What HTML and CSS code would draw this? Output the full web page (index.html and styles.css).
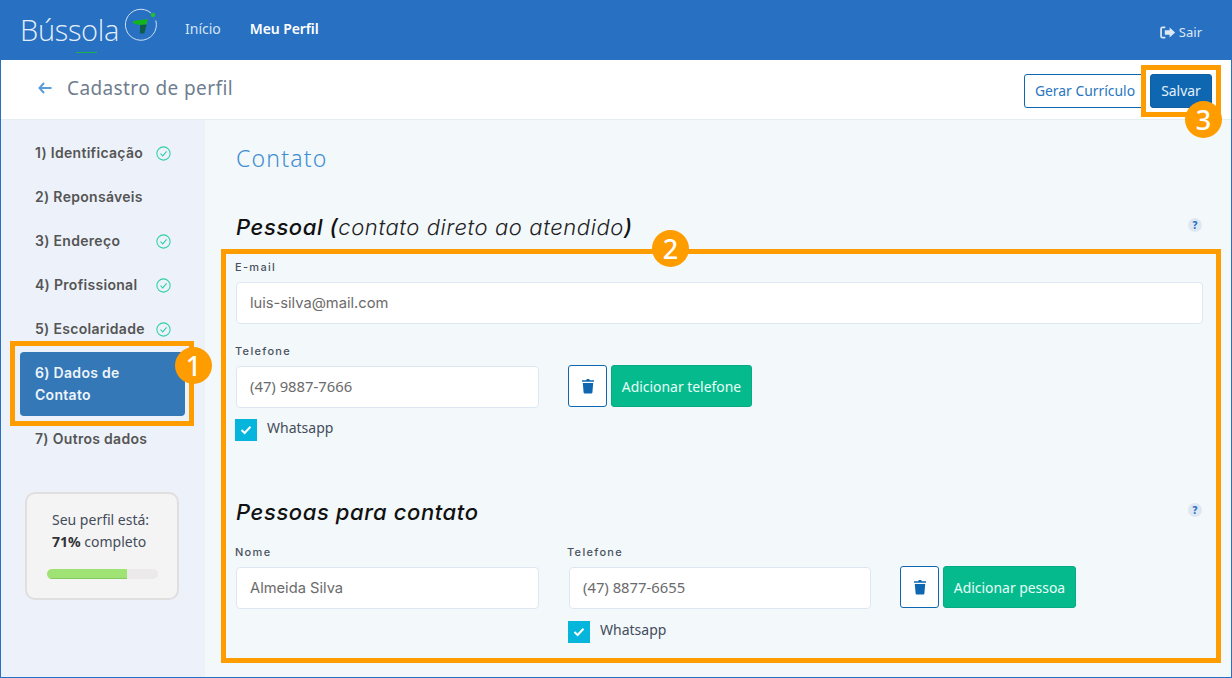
FILE: index.html
```html
<!DOCTYPE html>
<html lang="pt-BR">
<head>
<meta charset="utf-8">
<title>Bússola - Cadastro de perfil</title>
<link rel="stylesheet" href="styles.css">
</head>
<body>
<div class="frame">
  <header class="topbar">
    <div class="logo">
      <span class="logo-text">Bússola</span>
      <svg class="logo-mark" width="34" height="34" viewBox="0 0 34 34" aria-hidden="true">
        <path d="M27 5A15.5 15.5 0 1 0 31.8 12.5" fill="none" stroke="#cfe0f3" stroke-width="1"/>
        <circle cx="29" cy="7" r="2.2" fill="#22c02c"/>
        <path d="M8.7 13 23.7 11 22.7 16.4 16 17 9.5 15.6Z" fill="#12b51f"/>
        <path d="M16 17 22.7 16.4 20.3 25.4H16Z" fill="#0f5a4a"/>
      </svg>
      <span class="logo-line"></span>
    </div>
    <nav class="nav">
      <a class="nav-link">Início</a>
      <a class="nav-link nav-active">Meu Perfil</a>
    </nav>
    <a class="logout">
      <svg width="16" height="13" viewBox="0 0 15 12" aria-hidden="true">
        <path d="M5 1.2H2.4A1.4 1.4 0 0 0 1 2.6v6.8a1.4 1.4 0 0 0 1.4 1.4H5" fill="none" stroke="#dce8f6" stroke-width="1.6"/>
        <path d="M9 1.2 14.2 6 9 10.8V8H4.5V4H9Z" fill="#dce8f6"/>
      </svg>
      Sair
    </a>
  </header>

  <div class="subbar">
    <svg class="back" width="14" height="12" viewBox="0 0 14 12" aria-hidden="true">
      <path d="M6 1 1.5 6 6 11M2 6h11.5" fill="none" stroke="#5b9bd8" stroke-width="2"/>
    </svg>
    <h1 class="page-title">Cadastro de perfil</h1>
    <div class="actions">
      <button class="btn btn-outline">Gerar Currículo</button>
      <button class="btn btn-primary">Salvar</button>
    </div>
  </div>

  <div class="body">
    <aside class="sidebar">
      <ul class="steps">
        <li class="step"><span>1) Identificação</span><svg class="ok" viewBox="0 0 14 14"><circle cx="7" cy="7" r="6.2"/><path d="M4.2 7.2 6.3 9.2 9.9 5"/></svg></li>
        <li class="step"><span>2) Reponsáveis</span></li>
        <li class="step"><span>3) Endereço</span><svg class="ok" viewBox="0 0 14 14"><circle cx="7" cy="7" r="6.2"/><path d="M4.2 7.2 6.3 9.2 9.9 5"/></svg></li>
        <li class="step"><span>4) Profissional</span><svg class="ok" viewBox="0 0 14 14"><circle cx="7" cy="7" r="6.2"/><path d="M4.2 7.2 6.3 9.2 9.9 5"/></svg></li>
        <li class="step"><span>5) Escolaridade</span><svg class="ok" viewBox="0 0 14 14"><circle cx="7" cy="7" r="6.2"/><path d="M4.2 7.2 6.3 9.2 9.9 5"/></svg></li>
        <li class="step step-active"><span>6) Dados de<br>Contato</span></li>
        <li class="step"><span>7) Outros dados</span></li>
      </ul>
      <div class="progress-card">
        <p class="progress-text">Seu perfil está:<br><b>71%</b> completo</p>
        <div class="progress-track"><div class="progress-fill" style="width:72%"></div></div>
      </div>
    </aside>

    <main class="content">
      <h2 class="content-title">Contato</h2>

      <div class="section-head">
        <h3 class="section-title"><b>Pessoal (</b>contato direto ao atendido<b>)</b></h3>
        <span class="help">?</span>
      </div>

      <label class="field-label">E-mail</label>
      <div class="input input-mont">luis-silva@mail.com</div>

      <label class="field-label label-phone">Telefone</label>
      <div class="row">
        <div class="input input-half">(47) 9887-7666</div>
        <button class="btn-icon"><svg width="14" height="16" viewBox="0 0 14 16"><path d="M1 2.2h4.2L5.8 1h2.4l.6 1.2H13v1.6H1ZM1.8 5h10.4l-.8 9.4a1.2 1.2 0 0 1-1.2 1.1H3.8a1.2 1.2 0 0 1-1.2-1.1Z" fill="#0f67b1"/></svg></button>
        <button class="btn btn-add btn-add-phone">Adicionar telefone</button>
      </div>
      <div class="check-row">
        <span class="checkbox"><svg width="12" height="10" viewBox="0 0 12 10"><path d="M1.5 5 4.6 8 10.5 1.8" fill="none" stroke="#fff" stroke-width="2"/></svg></span>
        <span class="check-text">Whatsapp</span>
      </div>

      <div class="section-head section-people">
        <h3 class="section-title"><b>Pessoas para contato</b></h3>
        <span class="help">?</span>
      </div>

      <div class="people">
        <div class="col">
          <label class="field-label">Nome</label>
          <div class="input input-half input-mont">Almeida Silva</div>
        </div>
        <div class="col col-phone">
          <label class="field-label">Telefone</label>
          <div class="input input-half">(47) 8877-6655</div>
          <div class="check-row">
            <span class="checkbox"><svg width="12" height="10" viewBox="0 0 12 10"><path d="M1.5 5 4.6 8 10.5 1.8" fill="none" stroke="#fff" stroke-width="2"/></svg></span>
            <span class="check-text">Whatsapp</span>
          </div>
        </div>
        <div class="people-actions">
          <button class="btn-icon"><svg width="14" height="16" viewBox="0 0 14 16"><path d="M1 2.2h4.2L5.8 1h2.4l.6 1.2H13v1.6H1ZM1.8 5h10.4l-.8 9.4a1.2 1.2 0 0 1-1.2 1.1H3.8a1.2 1.2 0 0 1-1.2-1.1Z" fill="#0f67b1"/></svg></button>
          <button class="btn btn-add btn-add-person">Adicionar pessoa</button>
        </div>
      </div>
    </main>
  </div>

  <div class="mark mark-1"></div>
  <div class="mark mark-2"></div>
  <div class="mark mark-3"></div>
  <span class="badge badge-1">1</span>
  <span class="badge badge-2">2</span>
  <span class="badge badge-3">3</span>
</div>
</body>
</html>
```

FILE: styles.css
```css
* { box-sizing: border-box; }
html, body { margin: 0; height: 100%; }
body { font-family: "Noto Sans", "Open Sans", sans-serif; color: #444; overflow: hidden; }

.frame {
  position: relative;
  width: 1232px;
  height: 678px;
  display: flex;
  flex-direction: column;
  border: solid #2a70c2;
  border-width: 0 1px 1px 1px;
  background: #f3f8fb;
}

/* top bar */
.topbar {
  height: 60px;
  margin: 0 -1px;
  background: #2870c2;
  display: flex;
  align-items: flex-start;
  flex: none;
}
.logo { position: relative; width: 185px; height: 60px; flex: none; }
.logo-text {
  position: absolute;
  left: 20px;
  top: 10px;
  font: 300 29px/40px "Open Sans", sans-serif;
  color: #e4eef9;
  letter-spacing: -0.3px;
}
.logo-mark { position: absolute; left: 124px; top: 8px; }
.logo-line { position: absolute; left: 76px; top: 52px; width: 21px; height: 1px; background: #19b34a; }
.nav { display: flex; gap: 29px; padding-top: 19px; font-size: 14px; line-height: 20px; }
.nav-link { color: #d5e4f5; }
.nav-active { color: #fff; font-weight: 600; letter-spacing: -0.1px; }
.logout {
  margin-left: auto;
  margin-right: 30px;
  padding-top: 22px;
  display: flex;
  align-items: center;
  gap: 3px;
  font-size: 13px;
  line-height: 20px;
  color: #dce8f6;
}

/* sub bar */
.subbar {
  height: 60px;
  flex: none;
  background: #fff;
  border-bottom: 1px solid #e6eef2;
  display: flex;
  align-items: center;
  padding: 0 19px 0 37px;
}
.back { margin-top: -3px; }
.page-title { margin: -4px 0 0 15px; font-size: 19px; font-weight: 400; color: #6f7e8f; letter-spacing: 0.4px; }
.actions { margin-left: auto; margin-top: 2px; display: flex; gap: 4px; }
.btn {
  height: 34px;
  border-radius: 3px;
  font-family: inherit;
  font-size: 13.9px;
  padding: 0;
  cursor: pointer;
}
.btn-outline { width: 122px; background: #fff; border: 1px solid #0f67b1; color: #2a76bd; }
.btn-primary { width: 62px; background: #0f67b1; border: 1px solid #0f5fa3; color: #e6f0f9; }

/* layout */
.body { flex: 1; display: flex; min-height: 0; }

.sidebar { width: 204px; flex: none; background: #edf2fa; padding: 11px 0 0 19px; }
.steps { list-style: none; margin: 0; padding: 0; width: 165px; }
.step {
  display: flex;
  align-items: center;
  justify-content: space-between;
  padding: 11px 15px;
  font: 600 14px/22px "Inter", sans-serif;
  color: #555;
  letter-spacing: 0.3px;
}
.step-active {
  background: #3478b7;
  color: #eef4fa;
  border-radius: 4px;
  margin: 1px 0;
  padding: 10px 15px;
}
.ok { width: 15px; height: 15px; flex: none; margin-right: -1px; }
.ok circle, .ok path { fill: none; stroke: #2fcfa7; stroke-width: 1; }
.progress-card {
  width: 154px;
  height: 108px;
  margin: 31px 0 0 5px;
  padding: 15px 10px 0 25px;
  background: #f4f4f5;
  border: 2px solid #e0dedf;
  border-radius: 10px;
}
.progress-text { margin: 0 0 16px; font-size: 14px; line-height: 22px; color: #444c5a; white-space: nowrap; }
.progress-text b { color: #333; }
.progress-track { width: 111px; height: 10px; margin-left: -5px; background: #ebe9ea; border-radius: 5px; overflow: hidden; }
.progress-fill { height: 100%; background: #9fe374; border-bottom: 1px solid #85c95f; }

/* content */
.content { flex: 1; padding: 21px 28px 0 31px; min-width: 0; }
.content-title {
  margin: 0;
  font-size: 23px;
  line-height: 34px;
  font-weight: 300;
  color: #3f8ed2;
  letter-spacing: 1.2px;
}
.section-head { display: flex; align-items: center; justify-content: space-between; margin-top: 37px; height: 30px; padding-right: 1px; }
.section-people { margin-top: 56px; }
.section-title { margin: 0; font: italic 300 22px/30px "Inter", sans-serif; color: #222; letter-spacing: 0.6px; }
.section-title b { font-weight: 500; color: #111; }
.help {
  width: 14px;
  height: 14px;
  border-radius: 50%;
  margin-top: -5px;
  background: #dfe8f2;
  color: #2a70c2;
  font-size: 10px;
  font-weight: 800;
  line-height: 14px;
  text-align: center;
}
.field-label {
  display: block;
  margin: 18px 0 0 -1px;
  font: 500 11px/15px "Inter", sans-serif;
  letter-spacing: 1.3px;
  color: #4a5260;
}
.label-phone { margin-top: 20px; }
.input {
  height: 42px;
  margin-top: 7px;
  padding: 0 13px;
  background: #fff;
  border: 1px solid #dde7f2;
  border-radius: 4px;
  font-size: 14.8px;
  line-height: 39px;
  color: #6b6b6b;
}
.input-mont { font-family: "Inter", sans-serif; font-size: 14.7px; line-height: 40px; }
.input-half { width: 303px; }
.row { display: flex; align-items: flex-start; }
.row .btn-icon { margin: 6px 0 0 29px; }
.row .btn-add { margin: 6px 0 0 4px; }
.btn-icon {
  width: 39px;
  height: 42px;
  background: #fff;
  border: 1px solid #0f67b1;
  border-radius: 3px;
  padding: 0;
  display: flex;
  align-items: center;
  justify-content: center;
}
.btn-add { height: 42px; background: #05bb8e; border: 1px solid #06ab83; color: #e9fbf6; }
.btn-add-phone { width: 141px; }
.btn-add-person { width: 133px; }
.check-row { display: flex; align-items: center; gap: 10px; margin: 11px 0 0 -1px; font-size: 14px; line-height: 18px; color: #444c5a; }
.check-text { padding-bottom: 4px; }
.checkbox {
  width: 22px;
  height: 22px;
  background: #05b5dc;
  display: flex;
  align-items: center;
  justify-content: center;
}
.people { display: flex; align-items: flex-start; }
.people .field-label { margin-top: 18px; }
.people .input { margin-top: 7px; }
.col-phone { margin-left: 30px; }
.col-phone .input { width: 302px; }
.col-phone .field-label { margin-left: -2px; }
.col-phone .check-row { margin-top: 12px; }
.people-actions { display: flex; gap: 4px; margin: 39px 0 0 29px; }

/* annotations over the page */
.mark { position: absolute; border: 5px solid #ff9c00; pointer-events: none; }
.mark-1 { left: 9px; top: 341px; width: 184px; height: 85px; }
.mark-2 { left: 220px; top: 249px; width: 1000px; height: 414px; }
.mark-3 { left: 1140px; top: 65px; width: 80px; height: 52px; }
.badge {
  position: absolute;
  width: 37px;
  height: 37px;
  border-radius: 50%;
  background: #ff9c00;
  color: #fff;
  font-size: 27px;
  font-weight: 500;
  line-height: 37px;
  text-align: center;
}
.badge-1 { left: 174px; top: 347px; }
.badge-2 { left: 651px; top: 230px; }
.badge-3 { left: 1184px; top: 101px; }
```
